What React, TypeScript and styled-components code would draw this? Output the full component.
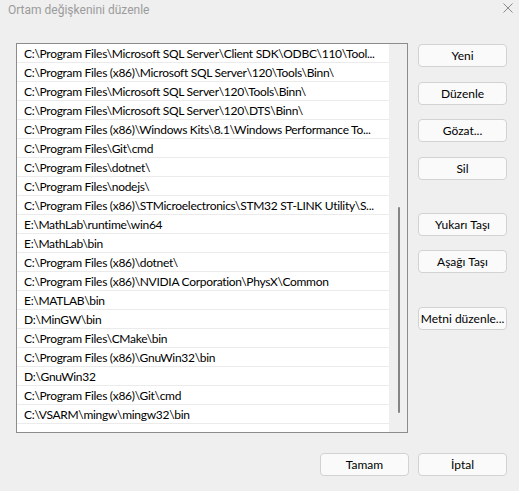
import styled, { createGlobalStyle } from "styled-components";

const GlobalStyle = createGlobalStyle`
  html, body {
    margin: 0;
    padding: 0;
    background: #efefef;
  }
  body {
    font-family: "Segoe UI", Roboto, "Noto Sans", sans-serif;
    font-size: 12px;
    color: #000;
  }
`;

// the last three are shown cut short, the way the dialog shows them
const paths = [
  "C:\\Program Files\\Microsoft SQL Server\\Client SDK\\ODBC\\110\\Tool...",
  "C:\\Program Files (x86)\\Microsoft SQL Server\\120\\Tools\\Binn\\",
  "C:\\Program Files\\Microsoft SQL Server\\120\\Tools\\Binn\\",
  "C:\\Program Files\\Microsoft SQL Server\\120\\DTS\\Binn\\",
  "C:\\Program Files (x86)\\Windows Kits\\8.1\\Windows Performance To...",
  "C:\\Program Files\\Git\\cmd",
  "C:\\Program Files\\dotnet\\",
  "C:\\Program Files\\nodejs\\",
  "C:\\Program Files (x86)\\STMicroelectronics\\STM32 ST-LINK Utility\\S...",
  "E:\\MathLab\\runtime\\win64",
  "E:\\MathLab\\bin",
  "C:\\Program Files (x86)\\dotnet\\",
  "C:\\Program Files (x86)\\NVIDIA Corporation\\PhysX\\Common",
  "E:\\MATLAB\\bin",
  "D:\\MinGW\\bin",
  "C:\\Program Files\\CMake\\bin",
  "C:\\Program Files (x86)\\GnuWin32\\bin",
  "D:\\GnuWin32",
  "C:\\Program Files (x86)\\Git\\cmd",
  "C:\\VSARM\\mingw\\mingw32\\bin",
];

const Window = styled.div`
  width: 519px;
  height: 491px;
  display: flex;
  flex-direction: column;
  background: #efefef;
  overflow: hidden;
`;

const TitleBar = styled.div`
  height: 22px;
  display: flex;
  align-items: center;
  justify-content: space-between;
  padding: 0 6px 0 8px;
`;

const Title = styled.span`
  color: #9b9b9b;
  font-size: 12px;
  margin-top: -2px;
`;

const CloseIcon = styled.svg`
  width: 10px;
  height: 10px;
  margin-top: -6px;
`;

const Body = styled.div`
  display: flex;
  gap: 10px;
  padding: 21px 12px 0 16px;
`;

const ListBox = styled.div`
  width: 390px;
  height: 388px;
  border: 1px solid #8c8c8c;
  background: #fff;
  display: flex;
`;

const Rows = styled.ul`
  list-style: none;
  margin: 0;
  padding: 0;
  width: 372px;
  height: 100%;
  background: #fff;
`;

const Row = styled.li`
  height: 18px;
  line-height: 19px;
  border-bottom: 1px solid #ebebeb;
  padding: 0 0 0 7px;
  font-family: Lato, Roboto, sans-serif;
  font-size: 12px;
  letter-spacing: -0.3px;
  white-space: nowrap;
  overflow: hidden;
`;

const ScrollTrack = styled.div`
  flex: 1;
  background: #efefef;
  display: flex;
  justify-content: center;
  padding-top: 163px;
`;

const ScrollThumb = styled.div`
  width: 2px;
  height: 206px;
  border-radius: 1px;
  background: #858585;
  margin-left: 1px;
`;

const ButtonColumn = styled.div`
  display: flex;
  flex-direction: column;
  padding-top: 1px;
`;

const Button = styled.button<{ $top?: number }>`
  width: 89px;
  height: 23px;
  margin-top: ${(p) => p.$top ?? 0}px;
  padding: 0;
  border: 1px solid #d2d2d2;
  border-radius: 4px;
  background: #fafafa;
  font-family: Lato, Roboto, sans-serif;
  font-size: 12px;
  white-space: nowrap;
  color: #000;
`;

const Footer = styled.div`
  display: flex;
  justify-content: flex-end;
  gap: 9px;
  padding: 20px 12px 0 0;
`;

const App = () => {
  return (
    <>
      <GlobalStyle />
      <Window>
        <TitleBar>
          <Title>Ortam değişkenini düzenle</Title>
          <CloseIcon viewBox="0 0 10 10">
            <path d="M0.5 0.5 L9.5 9.5 M9.5 0.5 L0.5 9.5" stroke="#8a8a8a" strokeWidth="1" />
          </CloseIcon>
        </TitleBar>
        <Body>
          <ListBox>
            <Rows>
              {paths.map((p) => (
                <Row key={p}>{p}</Row>
              ))}
            </Rows>
            <ScrollTrack>
              <ScrollThumb />
            </ScrollTrack>
          </ListBox>
          <ButtonColumn>
            <Button>Yeni</Button>
            <Button $top={15}>Düzenle</Button>
            <Button $top={14}>Gözat...</Button>
            <Button $top={15}>Sil</Button>
            <Button $top={33}>Yukarı Taşı</Button>
            <Button $top={14}>Aşağı Taşı</Button>
            <Button $top={34}>Metni düzenle...</Button>
          </ButtonColumn>
        </Body>
        <Footer>
          <Button>Tamam</Button>
          <Button>İptal</Button>
        </Footer>
      </Window>
    </>
  );
};

export default App;
